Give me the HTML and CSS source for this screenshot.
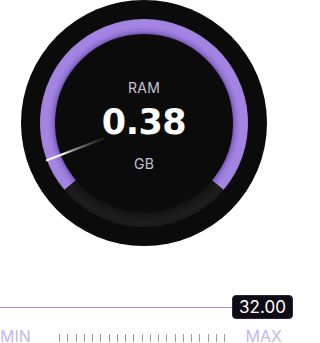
FILE: index.html
```html
<!DOCTYPE html>
<html>
<head>
<meta charset="utf-8">
<link rel="stylesheet" href="styles.css">
</head>
<body>
<div class="gauge">
  <svg class="dial" viewBox="0 0 246 246" width="246" height="246">
    <defs>
      <radialGradient id="pg" gradientUnits="userSpaceOnUse" cx="123" cy="123" r="104">
        <stop offset="0.855" stop-color="#7557b8"/>
        <stop offset="0.89" stop-color="#9676d6"/>
        <stop offset="0.93" stop-color="#a585e3"/>
        <stop offset="1" stop-color="#a383e0"/>
      </radialGradient>
      <radialGradient id="tg" gradientUnits="userSpaceOnUse" cx="123" cy="123" r="104">
        <stop offset="0.855" stop-color="#121212"/>
        <stop offset="0.95" stop-color="#1d1d1d"/>
        <stop offset="1" stop-color="#1a1a1a"/>
      </radialGradient>
      <linearGradient id="ng" gradientUnits="userSpaceOnUse" x1="25.9" y1="160.3" x2="82.9" y2="138.4">
        <stop offset="0" stop-color="#ffffff"/>
        <stop offset="0.28" stop-color="#f2f2f2"/>
        <stop offset="0.45" stop-color="#9a9a9a"/>
        <stop offset="1" stop-color="#555555" stop-opacity="0.2"/>
      </linearGradient>
    </defs>
    <circle cx="123" cy="123" r="123" fill="#0b0b0b"/>
    <circle cx="123" cy="123" r="96.5" fill="none" stroke="url(#tg)" stroke-width="15"/>
    <path d="M 49.08 185.03 A 96.5 96.5 0 1 1 196.92 185.03" fill="none" stroke="url(#pg)" stroke-width="15"/>
    <line x1="25.9" y1="160.3" x2="82.9" y2="138.4" stroke="url(#ng)" stroke-width="2.2" stroke-linecap="round"/>
  </svg>
  <div class="readout">
    <div class="label">RAM</div>
    <div class="value">0.38</div>
    <div class="unit">GB</div>
  </div>
</div>
<div class="slider">
  <div class="rail"></div>
  <div class="bubble">32.00</div>
</div>
<div class="scale">
  <span class="end">MIN</span>
  <div class="ticks">
    <i></i><i></i><i></i><i></i><i></i><i></i><i></i><i></i><i></i><i></i><i></i><i></i><i></i><i></i><i></i><i></i><i></i><i></i><i></i><i></i><i></i>
  </div>
  <span class="end max">MAX</span>
</div>
</body>
</html>
```
FILE: styles.css
```css
html, body {
  margin: 0;
  padding: 0;
  background: #ffffff;
}
body {
  width: 297px;
  height: 343px;
  overflow: hidden;
  font-family: Inter, "Noto Sans", sans-serif;
}
.gauge {
  display: grid;
  width: 246px;
  height: 246px;
  margin-left: 21px;
}
.dial, .readout {
  grid-area: 1 / 1;
}
.dial {
  display: block;
}
.readout {
  display: flex;
  flex-direction: column;
  align-items: center;
  padding-top: 80.8px;
}
.label, .unit {
  font-size: 14px;
  line-height: 14px;
  color: #c8c2d8;
  letter-spacing: 0.3px;
}
.value {
  margin-top: 9.6px;
  font-family: "DejaVu Sans", sans-serif;
  font-weight: bold;
  font-size: 35px;
  line-height: 36px;
  color: #ffffff;
  letter-spacing: -0.5px;
}
.unit {
  margin-top: 16.7px;
}
.slider {
  display: flex;
  align-items: center;
  margin-top: 49px;
  height: 24px;
  padding-right: 4px;
}
.rail {
  flex: 1;
  height: 1px;
  background: #a88ddf;
}
.bubble {
  width: 61px;
  height: 24px;
  box-sizing: border-box;
  border: 1px solid #2e2640;
  border-radius: 4px;
  background: #0e0b14;
  color: #ffffff;
  font-size: 17px;
  line-height: 22px;
  text-align: center;
}
.scale {
  display: flex;
  align-items: flex-start;
  margin-top: 8.8px;
  height: 16px;
}
.end {
  font-size: 16px;
  line-height: 16px;
  color: #c6b7ea;
}
.ticks {
  display: flex;
  gap: 7.25px;
  margin-left: 28.3px;
  margin-top: 6.7px;
}
.ticks i {
  display: block;
  width: 1px;
  height: 7.5px;
  background: #9d99ad;
}
.max {
  margin-left: 20.5px;
}
```
